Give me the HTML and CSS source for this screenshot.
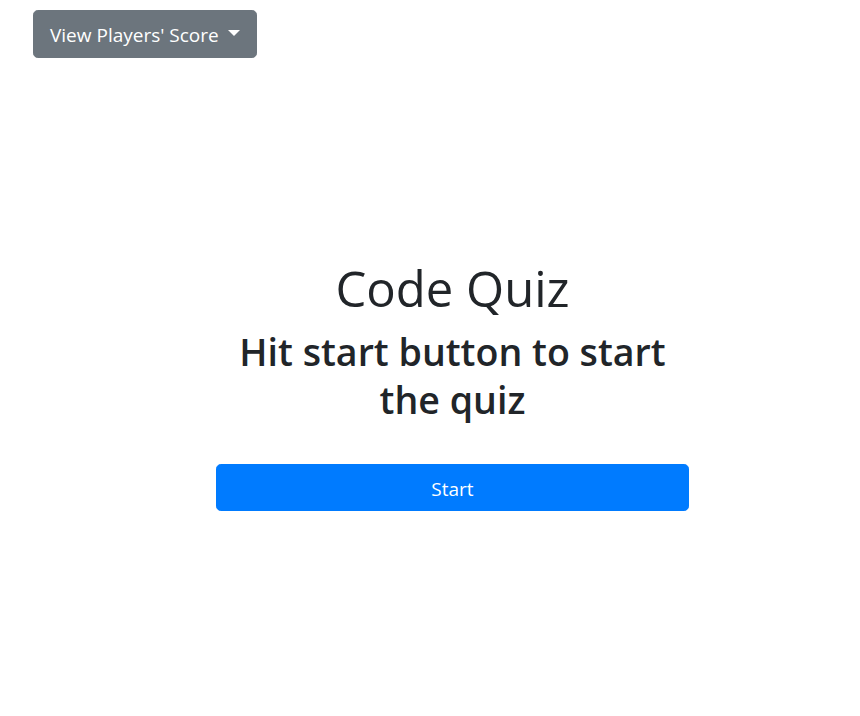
FILE: index.html
```html
<!DOCTYPE html>
<html lang="en">
<head>
<meta charset="utf-8">
<title>Code Quiz</title>
<link rel="stylesheet" href="styles.css">
</head>
<body>
  <header class="topbar">
    <button class="btn btn-secondary dropdown-toggle" type="button">
      <span class="btn-label">View Players' Score</span>
      <span class="caret"></span>
    </button>
  </header>
  <main class="quiz">
    <h1 class="quiz-title">Code Quiz</h1>
    <h2 class="quiz-subtitle">Hit start button to start the quiz</h2>
    <button class="btn btn-primary btn-block" type="button">Start</button>
  </main>
</body>
</html>
```

FILE: styles.css
```css
* { box-sizing: border-box; }

html, body {
  margin: 0;
  padding: 0;
  background: #fff;
}

body {
  font-family: "Open Sans", "Noto Sans", sans-serif;
  color: #212529;
  width: 860px;
  height: 716px;
  overflow: hidden;
}

.topbar {
  padding: 10px 33px 0;
  height: 58px;
}

.btn {
  font-family: inherit;
  font-size: 19px;
  line-height: 30px;
  border: 1px solid transparent;
  border-radius: 4.8px;
  padding: 8px 16px;
  cursor: pointer;
  color: #fff;
}

.btn-secondary {
  background: #6c757d;
  border-color: #6c757d;
}

.dropdown-toggle {
  display: flex;
  align-items: center;
  width: 224px;
  height: 48px;
  padding-top: 9px;
  padding-bottom: 7px;
}

.caret {
  margin-left: auto;
  width: 0;
  height: 0;
  border-top: 6px solid #fff;
  border-left: 6px solid transparent;
  border-right: 6px solid transparent;
  margin-top: -4px;
}

.quiz {
  margin-left: 216px;
  width: 473px;
  padding-top: 202px;
  display: flex;
  flex-direction: column;
  align-items: stretch;
  text-align: center;
}

.quiz-title {
  margin: 0;
  font-size: 49px;
  font-weight: 400;
  line-height: 57.6px;
}

.quiz-subtitle {
  margin: 10px 0 0;
  font-size: 37.6px;
  font-weight: 600;
  line-height: 48px;
}

.btn-primary {
  margin-top: 40px;
  background: #007bff;
  border-color: #007bff;
  height: 47px;
  padding: 9px 16px 5px;
}
```
